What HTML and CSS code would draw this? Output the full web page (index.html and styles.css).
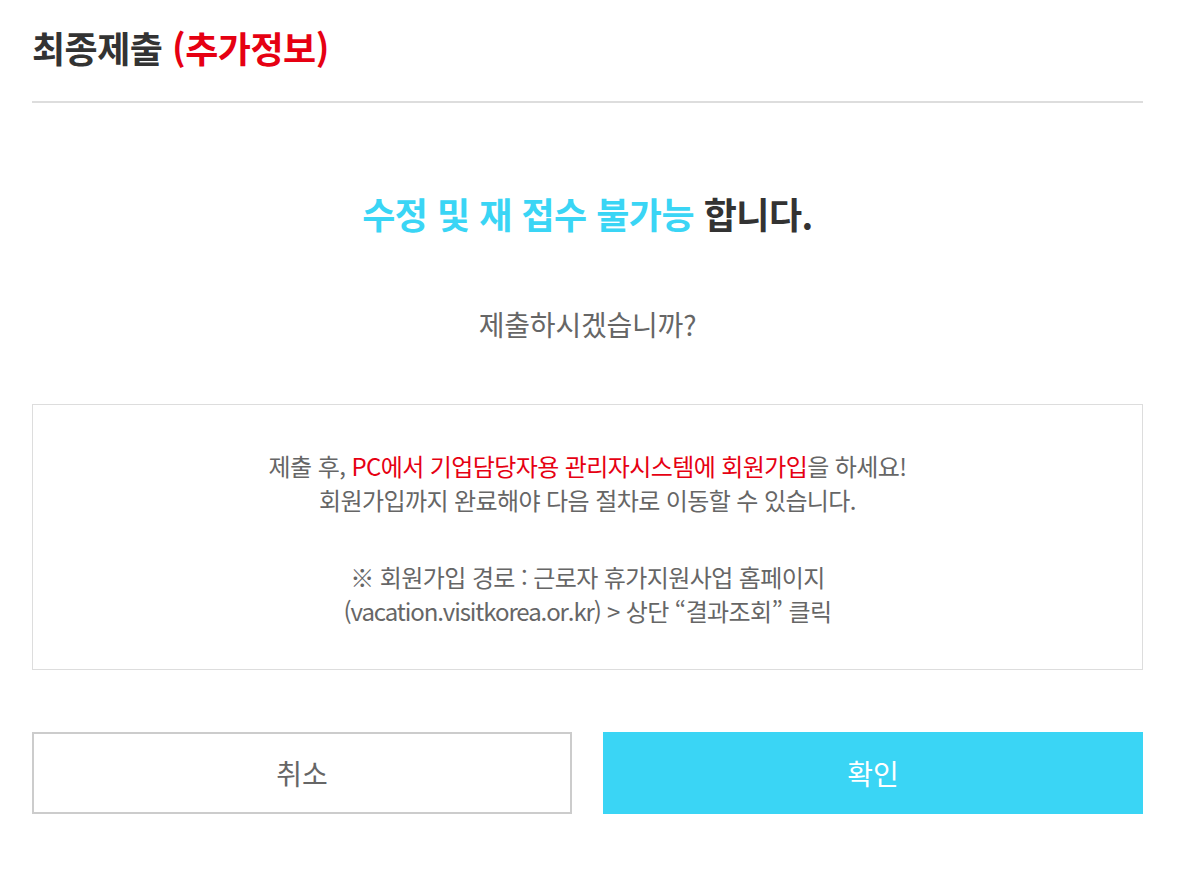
FILE: index.html
```html
<!DOCTYPE html>
<html lang="ko">
<head>
    <meta charset="UTF-8">
    <meta name="viewport" content="width=device-width, initial-scale=1.0">
    <title>최종제출 (추가정보)</title>
    <link rel="stylesheet" href="styles.css">
</head>
<body>
    <div class="popup">
        <div class="popup-head">
            <h1>최종제출 <span class="red">(추가정보)</span></h1>
        </div>

        <h2 class="warn"><span class="cyan">수정 및 재 접수 불가능</span> 합니다.</h2>
        <p class="ask">제출하시겠습니까?</p>

        <div class="notice">
            <p>제출 후, <span class="red">PC에서 기업담당자용 관리자시스템에 회원가입</span>을 하세요!<br>
            회원가입까지 완료해야 다음 절차로 이동할 수 있습니다.</p>
            <p class="route">※ 회원가입 경로 : 근로자 휴가지원사업 홈페이지<br>
            <span class="url">(vacation.visitkorea.or.kr)</span> &gt; 상단 “결과조회” 클릭</p>
        </div>

        <div class="btns">
            <button class="btn btn-cancel">취소</button>
            <button class="btn btn-ok">확인</button>
        </div>
    </div>
</body>
</html>
```

FILE: styles.css
```css
body {
    margin: 0;
    background: #fff;
    font-family: "Noto Sans CJK KR", "Noto Sans", sans-serif;
    color: #666;
}

.popup {
    width: 1111px;
    margin-left: 32px;
}

.popup-head {
    padding: 20px 0 27px;
    border-bottom: 2px solid #ddd;
}

.popup-head h1 {
    margin: 0;
    font-size: 36px;
    line-height: 54px;
    font-weight: 700;
    color: #333;
    letter-spacing: -0.5px;
}

.red {
    color: #e60012;
}

.cyan {
    color: #3ad5f5;
}

.warn {
    margin: 90px 0 0;
    text-align: center;
    font-size: 36px;
    line-height: 40px;
    font-weight: 700;
    color: #333;
    letter-spacing: -0.5px;
}

.ask {
    margin: 74px 0 0;
    text-align: center;
    font-size: 28px;
    line-height: 34px;
    letter-spacing: -0.2px;
}

.notice {
    margin-top: 63px;
    border: 1px solid #ddd;
    padding: 44px 0 41px;
    text-align: center;
    font-size: 24px;
    line-height: 34px;
    letter-spacing: -0.6px;
}

.notice p {
    margin: 0;
}

.notice .route {
    margin-top: 43px;
}

.notice .url {
    letter-spacing: -1.1px;
}

.btns {
    display: flex;
    justify-content: space-between;
    margin-top: 62px;
}

.btn {
    flex: 0 0 540px;
    height: 82px;
    font-family: inherit;
    font-size: 28px;
    cursor: pointer;
}

.btn-cancel {
    background: #fff;
    border: 2px solid #ccc;
    color: #666;
}

.btn-ok {
    background: #3ad5f5;
    border: none;
    color: #fff;
}
```
